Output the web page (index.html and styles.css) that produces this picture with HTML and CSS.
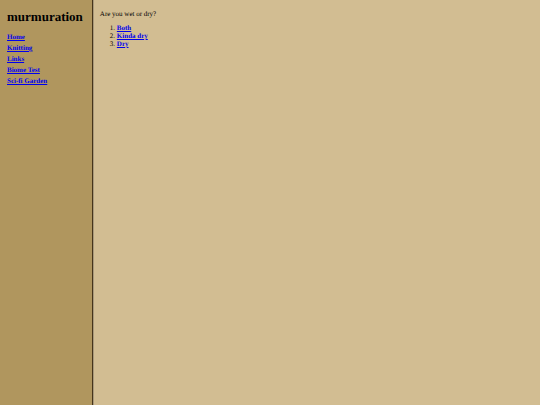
FILE: index.html
```html
<!DOCTYPE html>
<html lang="en">
<head>
    <meta charset="utf-8">
    <title>murmuration</title>
    <link rel="stylesheet" href="styles.css">
</head>

<body>

<nav class="sidebar">
    <h1>murmuration</h1>
    <ul class="menu">
        <li><a href="#home">Home</a></li>
        <li><a href="#knitting">Knitting</a></li>
        <li><a href="#links">Links</a></li>
        <li><a href="#biome">Biome Test</a></li>
        <li><a href="#garden">Sci-fi Garden</a></li>
    </ul>
</nav>

<main class="content">
    <p>Are you wet or dry?</p>
    <ol>
        <li><a href="#both">Both</a></li>
        <li><a href="#kinda">Kinda dry</a></li>
        <li><a href="#dry">Dry</a></li>
    </ol>
</main>

</body>
</html>
```

FILE: styles.css
```css
body {
    display: flex;
    min-height: 100vh;
    margin: 0;
    background-color: #d2bd92;
    color: #000;
    font-family: "Liberation Serif", "Times New Roman", serif;
    font-size: 7px;
    line-height: 8px;
    text-rendering: geometricPrecision;
}

a {
    color: #00e;
    font-weight: bold;
}

.sidebar {
    padding: 9px 9px 9px 7px;
    background-color: #b0965e;
    border-right: 1px solid #46341a;
    box-shadow: 1px 0 #a8987a;
}

.sidebar h1 {
    margin: 0 0 7px;
    font-size: 13px;
    line-height: 16px;
}

.menu {
    margin: 0;
    padding: 0;
    list-style: none;
}

.menu li {
    line-height: 11px;
}

.content {
    flex: 1;
    padding: 10px 7px;
}

.content p {
    margin: 0 0 6px;
}

.content ol {
    margin: 0;
    padding-left: 17px;
}
```
